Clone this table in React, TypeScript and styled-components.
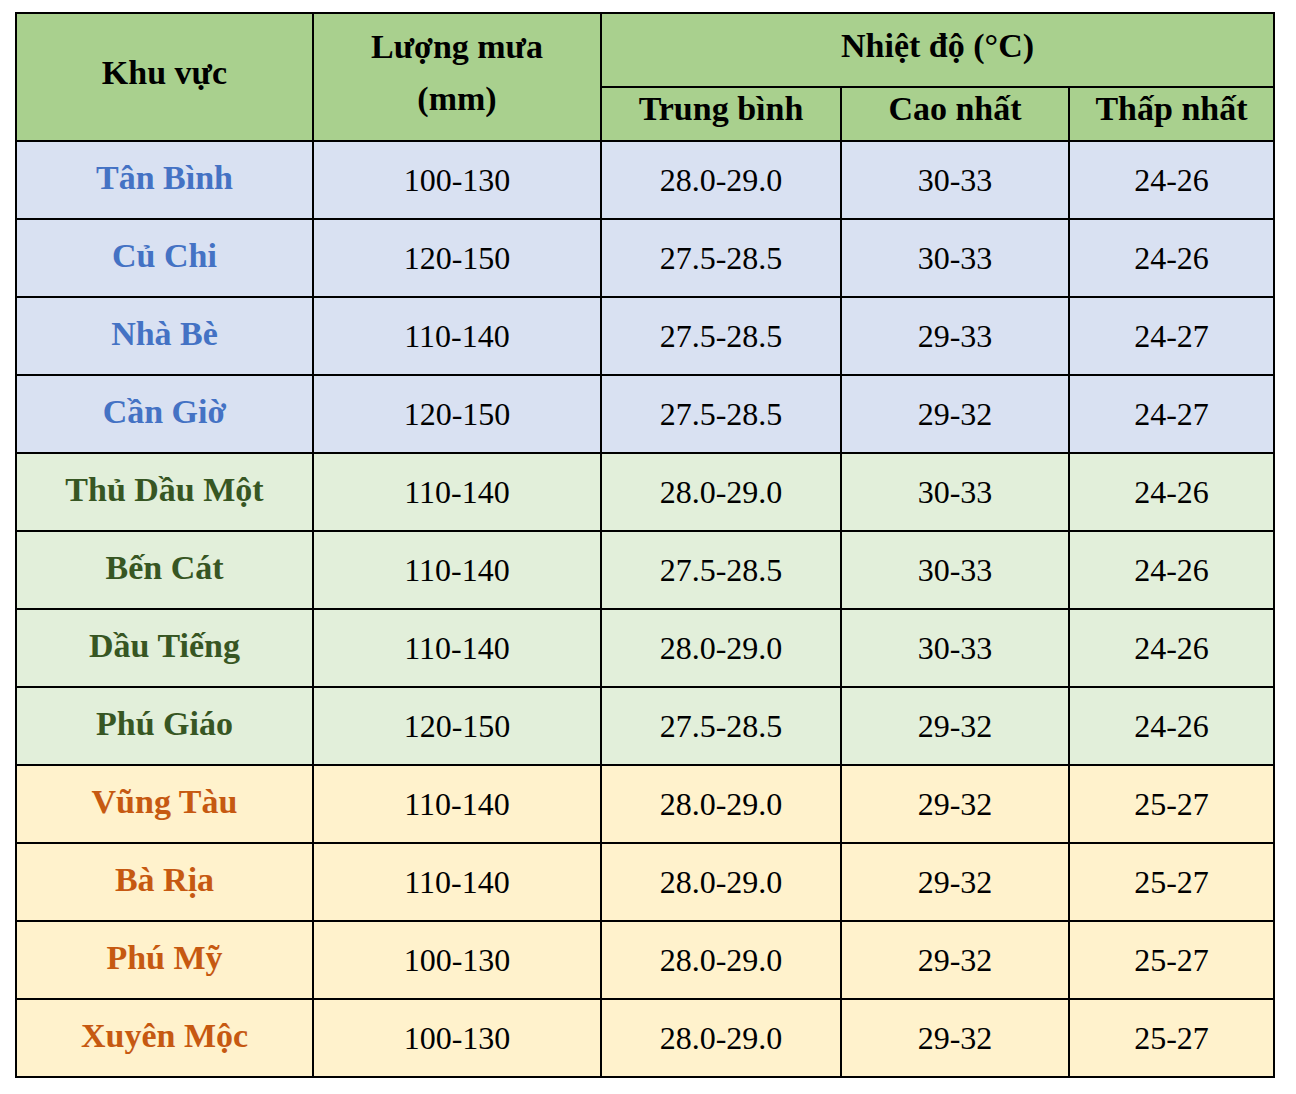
import React from 'react';
import styled, { createGlobalStyle } from 'styled-components';

type Group = 'blue' | 'green' | 'orange';

const palette: Record<Group, { bg: string; fg: string }> = {
  blue: { bg: '#d9e1f2', fg: '#4472c4' },
  green: { bg: '#e2efda', fg: '#375623' },
  orange: { bg: '#fff2cc', fg: '#c65911' }
};

const rows: { name: string; group: Group; rain: string; avg: string; max: string; min: string }[] = [
  { name: 'Tân Bình', group: 'blue', rain: '100-130', avg: '28.0-29.0', max: '30-33', min: '24-26' },
  { name: 'Củ Chi', group: 'blue', rain: '120-150', avg: '27.5-28.5', max: '30-33', min: '24-26' },
  { name: 'Nhà Bè', group: 'blue', rain: '110-140', avg: '27.5-28.5', max: '29-33', min: '24-27' },
  { name: 'Cần Giờ', group: 'blue', rain: '120-150', avg: '27.5-28.5', max: '29-32', min: '24-27' },
  { name: 'Thủ Dầu Một', group: 'green', rain: '110-140', avg: '28.0-29.0', max: '30-33', min: '24-26' },
  { name: 'Bến Cát', group: 'green', rain: '110-140', avg: '27.5-28.5', max: '30-33', min: '24-26' },
  { name: 'Dầu Tiếng', group: 'green', rain: '110-140', avg: '28.0-29.0', max: '30-33', min: '24-26' },
  { name: 'Phú Giáo', group: 'green', rain: '120-150', avg: '27.5-28.5', max: '29-32', min: '24-26' },
  { name: 'Vũng Tàu', group: 'orange', rain: '110-140', avg: '28.0-29.0', max: '29-32', min: '25-27' },
  { name: 'Bà Rịa', group: 'orange', rain: '110-140', avg: '28.0-29.0', max: '29-32', min: '25-27' },
  { name: 'Phú Mỹ', group: 'orange', rain: '100-130', avg: '28.0-29.0', max: '29-32', min: '25-27' },
  { name: 'Xuyên Mộc', group: 'orange', rain: '100-130', avg: '28.0-29.0', max: '29-32', min: '25-27' }
];

const GlobalStyle = createGlobalStyle`
  html, body {
    margin: 0;
    padding: 0;
    background: #ffffff;
  }
`;

const Page = styled.div`
  padding: 12px 0 0 15px;
  font-family: 'Liberation Serif', 'Times New Roman', serif;
`;

const Table = styled.table`
  border-collapse: collapse;
  table-layout: fixed;
  width: 1258px;
`;

const HeadCell = styled.th<{ $h: number; $pb: number; $lh?: number }>`
  background: #a9d08e;
  border: 2px solid #000;
  color: #000;
  font-size: 34px;
  font-weight: bold;
  line-height: ${p => p.$lh ?? 52}px;
  height: ${p => p.$h}px;
  padding: 0 0 ${p => p.$pb}px;
  text-align: center;
  vertical-align: middle;
  white-space: nowrap;
`;

const Row = styled.tr<{ $group: Group }>`
  height: 78px;
  background: ${p => palette[p.$group].bg};
`;

const NameCell = styled.td<{ $group: Group }>`
  border: 2px solid #000;
  color: ${p => palette[p.$group].fg};
  font-size: 34px;
  font-weight: bold;
  text-align: center;
  padding: 0 0 4px;
  white-space: nowrap;
`;

const ValueCell = styled.td`
  border: 2px solid #000;
  color: #000;
  font-size: 32px;
  text-align: center;
  padding: 0;
  white-space: nowrap;
`;

export default function App() {
  return (
    <Page>
      <GlobalStyle />
      <Table>
        <colgroup>
          <col style={{ width: 297 }} />
          <col style={{ width: 288 }} />
          <col style={{ width: 240 }} />
          <col style={{ width: 228 }} />
          <col style={{ width: 205 }} />
        </colgroup>
        <thead>
          <tr>
            <HeadCell rowSpan={2} $h={64} $pb={8}>Khu vực</HeadCell>
            <HeadCell rowSpan={2} $h={64} $pb={8}>
              Lượng mưa
              <br />
              (mm)
            </HeadCell>
            <HeadCell colSpan={3} $h={64} $pb={8} $lh={40}>Nhiệt độ (°C)</HeadCell>
          </tr>
          <tr>
            <HeadCell $h={42} $pb={10} $lh={40}>Trung bình</HeadCell>
            <HeadCell $h={42} $pb={10} $lh={40}>Cao nhất</HeadCell>
            <HeadCell $h={42} $pb={10} $lh={40}>Thấp nhất</HeadCell>
          </tr>
        </thead>
        <tbody>
          {rows.map(r => (
            <Row key={r.name} $group={r.group}>
              <NameCell $group={r.group}>{r.name}</NameCell>
              <ValueCell>{r.rain}</ValueCell>
              <ValueCell>{r.avg}</ValueCell>
              <ValueCell>{r.max}</ValueCell>
              <ValueCell>{r.min}</ValueCell>
            </Row>
          ))}
        </tbody>
      </Table>
    </Page>
  );
}
